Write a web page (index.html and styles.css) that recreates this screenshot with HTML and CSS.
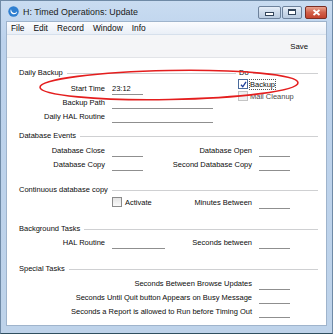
FILE: index.html
```html
<!DOCTYPE html>
<html lang="en">
<head>
    <meta charset="UTF-8">
    <title>H: Timed Operations: Update</title>
    <link rel="stylesheet" href="styles.css">
</head>
<body>
    <div class="window">
        <!-- Title bar -->
        <div class="titlebar">
            <svg class="app-icon" width="11" height="11" viewBox="0 0 11 11">
                <circle cx="5.5" cy="5.5" r="5.2" fill="#2f7fd0"/>
                <path d="M3 3.2 C1.8 5 3 8.2 6 8.3 C8 8.3 9.2 6.8 9 5.2 C8.2 6.8 6.6 7.3 5.3 6.8 C3.9 6.2 3.4 4.8 3 3.2 Z" fill="#fff"/>
            </svg>
            <span class="title">H: Timed Operations: Update</span>
            <div class="caption">
                <span class="cap-btn cap-min"><i></i></span>
                <span class="cap-btn cap-max"><i></i></span>
                <span class="cap-btn cap-close">
                    <svg width="9" height="7" viewBox="0 0 9 7"><path d="M1.5 1 L7.5 6 M7.5 1 L1.5 6" stroke="#fff" stroke-width="1.8"/></svg>
                </span>
            </div>
        </div>

        <div class="client">
            <!-- Menu -->
            <div class="menubar">
                <span>File</span>
                <span>Edit</span>
                <span>Record</span>
                <span>Window</span>
                <span>Info</span>
            </div>

            <!-- Button bar -->
            <div class="toolbar">
                <span class="save">Save</span>
            </div>

            <div class="form">
                <!-- Daily Backup -->
                <div class="group group-backup">
                    <div class="group-head">
                        <div class="head-left"><span>Daily Backup</span><span class="rule"></span></div>
                        <span class="do">Do</span><span class="rule"></span>
                    </div>
                    <div class="backup-body">
                        <div class="rows">
                            <div class="row">
                                <span class="label">Start Time</span>
                                <span class="field f-short">23:12</span>
                            </div>
                            <div class="row">
                                <span class="label">Backup Path</span>
                                <span class="field f-long"></span>
                            </div>
                            <div class="row">
                                <span class="label">Daily HAL Routine</span>
                                <span class="field f-long"></span>
                            </div>
                        </div>
                        <div class="checks">
                            <div class="check">
                                <span class="box checked">
                                    <svg width="7" height="7" viewBox="0 0 7 7"><path d="M1 3.8 L2.8 5.8 L6 0.8" stroke="#1d3f9c" stroke-width="1.3" fill="none"/></svg>
                                </span>
                                <span class="check-text focus">Backup</span>
                            </div>
                            <div class="check disabled">
                                <span class="box"></span>
                                <span class="check-text">Mail Cleanup</span>
                            </div>
                        </div>
                    </div>
                </div>

                <!-- Database Events -->
                <div class="group group-events">
                    <div class="group-head"><span>Database Events</span><span class="rule"></span></div>
                    <div class="row">
                        <span class="label">Database Close</span>
                        <span class="field f-short"></span>
                        <span class="label2">Database Open</span>
                        <span class="field2"></span>
                    </div>
                    <div class="row">
                        <span class="label">Database Copy</span>
                        <span class="field f-short"></span>
                        <span class="label2">Second Database Copy</span>
                        <span class="field2"></span>
                    </div>
                </div>

                <!-- Continuous database copy -->
                <div class="group group-copy">
                    <div class="group-head"><span>Continuous database copy</span><span class="rule"></span></div>
                    <div class="row">
                        <span class="field-check">
                            <span class="box"></span>
                            <span>Activate</span>
                        </span>
                        <span class="label2">Minutes Between</span>
                        <span class="field2"></span>
                    </div>
                </div>

                <!-- Background Tasks -->
                <div class="group group-bg">
                    <div class="group-head"><span>Background Tasks</span><span class="rule"></span></div>
                    <div class="row">
                        <span class="label">HAL Routine</span>
                        <span class="field f-mid"></span>
                        <span class="label2">Seconds between</span>
                        <span class="field2"></span>
                    </div>
                </div>

                <!-- Special Tasks -->
                <div class="group group-special">
                    <div class="group-head"><span>Special Tasks</span><span class="rule"></span></div>
                    <div class="row">
                        <span class="label-wide">Seconds Between Browse Updates</span>
                        <span class="field2"></span>
                    </div>
                    <div class="row">
                        <span class="label-wide">Seconds Until Quit button Appears on Busy Message</span>
                        <span class="field2"></span>
                    </div>
                    <div class="row">
                        <span class="label-wide">Seconds a Report is allowed to Run before Timing Out</span>
                        <span class="field2"></span>
                    </div>
                </div>
            </div>
        </div>

        <!-- red marker drawn over the form -->
        <svg class="marker" width="333" height="334" viewBox="0 0 333 334">
            <ellipse cx="169" cy="85" rx="129" ry="14.5" transform="rotate(-1 169 85)" fill="none" stroke="#e41e1e" stroke-width="1.6"/>
        </svg>
    </div>
</body>
</html>
```

FILE: styles.css
```css
/* Page */
body {
    margin: 0;
    padding: 0;
    background: #fff;
    font-family: "Liberation Sans", Arial, sans-serif;
    font-size: 7.5px;
    color: #0c0c0c;
}

/* Window frame */
.window {
    position: relative;
    width: 333px;
    height: 334px;
    box-sizing: border-box;
    border: 1px solid #6f8aa6;
    border-bottom-color: #2f4f5f;
    background: linear-gradient(#c9dcf1, #bcd2ec 40px, #bed3ea);
    padding: 0 5px 7px 5px;
    display: flex;
    flex-direction: column;
}

.titlebar {
    height: 20px;
    display: flex;
    align-items: center;
    padding-left: 2px;
}

.app-icon {
    margin-right: 4px;
    margin-top: 1px;
}

.title {
    font-size: 8.9px;
    color: #1a1a1a;
    margin-top: 1px;
}

.caption {
    margin-left: auto;
    display: flex;
    gap: 1px;
    margin-top: 2px;
    margin-right: 0;
}

.cap-btn {
    height: 11px;
    border: 1px solid #6d829c;
    border-radius: 2px;
    background: linear-gradient(#e6eef8, #cbd9ea 50%, #b9cbe0);
    display: flex;
    align-items: center;
    justify-content: center;
}

.cap-min { width: 21px; }
.cap-max { width: 18px; }

.cap-min i {
    width: 7px;
    height: 2px;
    border: 1px solid #34465c;
    background: #fff;
    margin-top: 3px;
}

.cap-max i {
    width: 6px;
    height: 3px;
    border: 1px solid #34465c;
    border-top-width: 2px;
    background: #fff;
}

.cap-close {
    width: 20px;
    margin-left: 2px;
    border-color: #7a2e24;
    background: linear-gradient(#e8a38f, #d2604a 50%, #c4432e);
}

/* Client area */
.client {
    flex: 1;
    background: #fff;
    border: 1px solid #9fb4cc;
    display: flex;
    flex-direction: column;
}

.menubar {
    height: 12px;
    display: flex;
    align-items: center;
    font-size: 8.4px;
    background: linear-gradient(#fbfcfe, #e9eff7);
    border-bottom: 1px solid #d6e0ec;
    padding-left: 4px;
}

.menubar span {
    margin-right: 9px;
}

.toolbar {
    height: 22px;
    background: #f4f5f7;
    border-bottom: 1px solid #e2e4e8;
    display: flex;
    align-items: center;
    justify-content: flex-end;
    padding-right: 18px;
}

.save {
    font-size: 7.8px;
}

/* Form */
.form {
    padding: 7px 8px 0 0;
}

.group-head {
    height: 14px;
    display: flex;
    align-items: center;
    padding-left: 12px;
}

.head-left {
    width: 217px;
    display: flex;
    align-items: center;
}

.rule {
    flex: 1;
    height: 1px;
    background: #cfd0d2;
    margin: 2px 0 0 4px;
}

.do {
    margin-left: 3px;
}

.row {
    height: 14px;
    display: grid;
    grid-template-columns: 98px 7px 60px 80px 7px 31px;
    align-items: center;
}

.label {
    grid-column: 1;
    text-align: right;
    white-space: nowrap;
}

.label2 {
    grid-column: 4;
    text-align: right;
    white-space: nowrap;
}

.label-wide {
    grid-column: 1 / 5;
    text-align: right;
    white-space: nowrap;
}

.field,
.field2 {
    height: 10px;
    border-bottom: 1px solid #8f8f8f;
    box-sizing: border-box;
    line-height: 8px;
    margin-top: 3px;
}

.field {
    grid-column: 3;
}

.field2 {
    grid-column: 6;
}

.f-short { width: 31px; }
.f-mid { width: 53px; }
.f-long { width: 101px; }

/* Checkboxes */
.box {
    width: 8px;
    height: 8px;
    border: 1px solid #8b8b8b;
    background: linear-gradient(#e4e4e4, #fafafa);
    display: inline-flex;
    align-items: center;
    justify-content: center;
    flex-shrink: 0;
}

.box.checked {
    border-color: #4a6b9c;
    background: #fff;
}

.backup-body {
    display: flex;
    margin-top: 2px;
}

.rows {
    width: 231px;
}

.checks {
    margin-top: -3px;
}

.check {
    height: 12px;
    display: flex;
    align-items: center;
    gap: 2px;
}

.check-text {
    line-height: 9px;
}

.check-text.focus {
    outline: 1px dotted #555;
    outline-offset: 0;
}

.check.disabled .box {
    border-color: #c4c4c4;
    background: #f0f0f0;
}

.check.disabled .check-text {
    color: #4a4a4a;
}

.field-check {
    grid-column: 3;
    display: flex;
    align-items: center;
    gap: 3px;
}

/* Group spacing */
.group-events { margin-top: 5px; }
.group-events .group-head { margin-bottom: 1px; }
.group-copy { margin-top: 11px; }
.group-copy .group-head { margin-bottom: -1px; }
.group-bg { margin-top: 12px; }
.group-special { margin-top: 12px; }
.group-special .group-head { margin-bottom: 1px; }

/* Red highlight drawn over the form */
.marker {
    position: absolute;
    left: -1px;
    top: -1px;
    pointer-events: none;
}
```
